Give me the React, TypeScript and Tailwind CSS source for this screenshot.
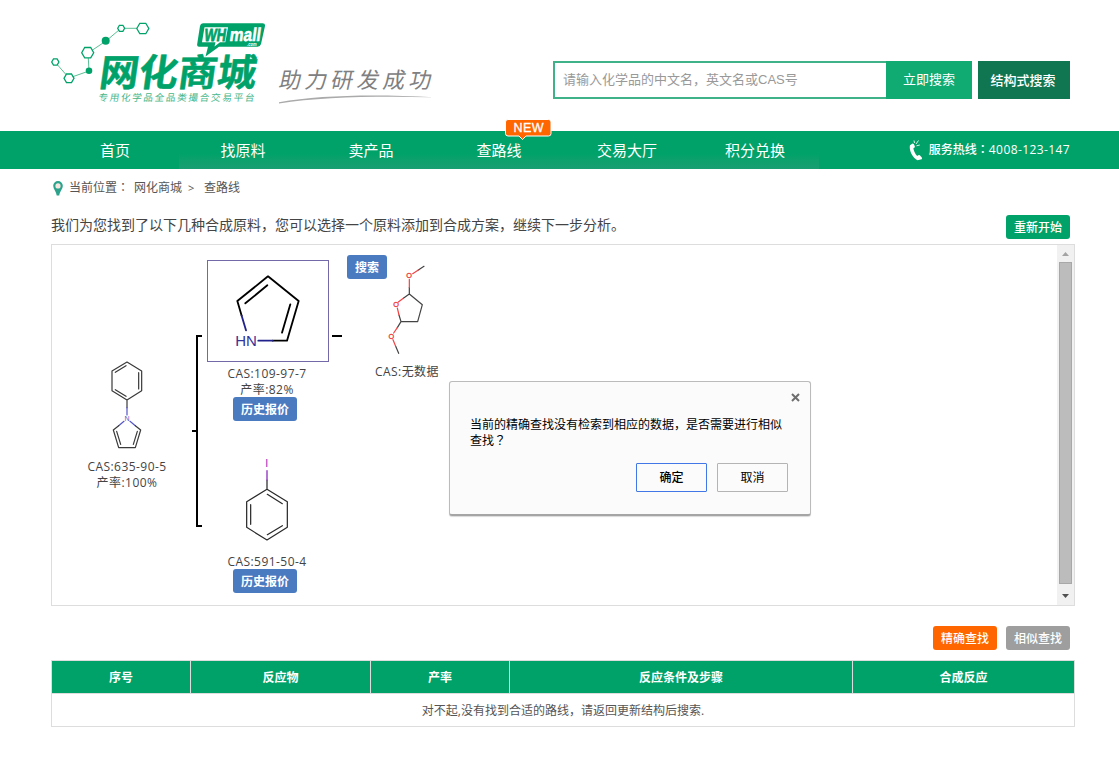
import type { ReactNode } from "react";

const navItems = ["首页", "找原料", "卖产品", "查路线", "交易大厅", "积分兑换"];

const columns = [
  { label: "序号", width: "w-[139px]" },
  { label: "反应物", width: "w-[180px]" },
  { label: "产率", width: "w-[139px]" },
  { label: "反应条件及步骤", width: "w-[343px]" },
  { label: "合成反应", width: "w-[221px]" },
];

/* Full-width punctuation centred in its cell. */
function Mark({ children }: { children: ReactNode }) {
  return <span className="font-['Noto_Sans_CJK_TC',sans-serif] leading-none">{children}</span>;
}

function Logo() {
  return (
    <svg
      className="block font-['Noto_Sans_CJK_SC',sans-serif]"
      width="400"
      height="110"
      viewBox="40 10 400 110"
      role="img"
      aria-label="网化商城"
    >
      <path
        d="M55 62L69 78L89 71L88 53L106 41L121 28.3H142"
        fill="none"
        stroke="#5bbf95"
        strokeWidth="1"
      />
      <g fill="#fff" stroke="#00a26a" strokeWidth="1.3">
        <path d="M51.7 62l1.8-3.1h3.6l1.8 3.1-1.8 3.1h-3.6z" />
        <path d="M64 78.3l2.5-4.3h5l2.5 4.3-2.5 4.3h-5z" />
        <path d="M81.7 52.7l3-5.2h6l3 5.2-3 5.2h-6z" />
        <path d="M117.7 28.3l1.7-3h3.5l1.7 3-1.7 3h-3.5z" />
        <path d="M136.8 28.5l3-5.2h6l3 5.2-3 5.2h-6z" />
      </g>
      <circle cx="89" cy="70.8" r="3.3" fill="#00a26a" />
      <circle cx="105.7" cy="40.8" r="4" fill="#00a26a" />
      <text
        transform="translate(98 85.8) skewX(-8)"
        fontSize="37.5"
        fontWeight="700"
        fill="#00a26a"
        stroke="#00a26a"
        strokeWidth=".5"
        textLength="157"
        lengthAdjust="spacingAndGlyphs"
      >
        网化商城
      </text>
      <text
        transform="translate(98 101.3) skewX(-8)"
        fontSize="9.6"
        fill="#45b78a"
        textLength="156"
      >
        专用化学品全品类撮合交易平台
      </text>
      <path
        d="M203 23.3H262.5Q265.5 23.3 265 26L261 44Q260.3 46.7 257.5 46.7H219L205.5 56.5L208 46.7H199Q196.7 46.7 197.2 44L200 26Q200.5 23.3 203 23.3z"
        fill="#00a26a"
      />
      <path d="M204.5 27.3H228L225.3 42.3H220L214.5 46.5L215.5 42.3H202z" fill="#fff" />
      <text
        transform="translate(203.8 41.2) skewX(-8)"
        fontFamily="Liberation Sans"
        fontSize="17.5"
        fontWeight="700"
        fill="#00a26a"
        stroke="#00a26a"
        strokeWidth=".8"
        textLength="21.5"
        lengthAdjust="spacingAndGlyphs"
      >
        WH
      </text>
      <text
        transform="translate(229 41) skewX(-8)"
        fontFamily="Liberation Sans"
        fontSize="18.5"
        fontWeight="700"
        fill="#fff"
        stroke="#fff"
        strokeWidth=".5"
        textLength="31"
        lengthAdjust="spacingAndGlyphs"
      >
        mall
      </text>
      <text
        x="247"
        y="45.6"
        fontFamily="Liberation Sans"
        fontSize="5.5"
        fontWeight="700"
        fontStyle="italic"
        fill="#fff"
        textLength="9.5"
        lengthAdjust="spacingAndGlyphs"
      >
        .com
      </text>
      <text
        transform="translate(278 88) skewX(-12)"
        fontSize="22"
        fontWeight="400"
        fill="#808080"
        textLength="152"
      >
        助力研发成功
      </text>
      <path d="M279 102.2C320 95 375 94 434 97.3C375 96 320 97 279 103.5z" fill="#aaa" />
    </svg>
  );
}

function Header() {
  return (
    <header className="flex h-[131px] items-start">
      <div className="w-[513px] pl-10 pt-2.5">
        <Logo />
      </div>
      <div className="ml-10 mt-[61px] flex h-[38px] text-[13px]">
        <div className="flex w-[333px] items-center border-2 border-r-0 border-[#3fb28a] pl-2 font-['Liberation_Sans','Noto_Sans_CJK_SC',sans-serif] text-[#999]">
          请输入化学品的中文名，英文名或CAS号
        </div>
        <button className="w-[86px] bg-[#0fab73] text-white">立即搜索</button>
        <button className="ml-1.5 w-[92px] bg-[#107652] pr-0.5 pt-0.5 font-medium text-white">结构式搜索</button>
      </div>
    </header>
  );
}

function Nav() {
  return (
    <nav className="flex h-[38px] bg-[#00a26a] pl-[51px] text-white">
      {navItems.map((item, i) => (
        <div
          key={item}
          className={
            "relative flex w-32 items-center justify-center text-[15px] " +
            (i > 0 ? "bg-linear-to-b from-[#00a26a] from-60% to-[#1a9e72]" : "")
          }
        >
          {item}
          {i < 5 && <span className="absolute right-[-1px] top-[11px] h-[15px] w-px bg-[#3cb588]" />}
          {item === "查路线" && (
            <span className="absolute left-[70px] top-[-12px] h-[22px] w-[48px]">
              <svg className="block" width="48" height="22" viewBox="0 0 48 22">
                <path
                  d="M3 .5H43.5Q46 .5 46 3V14.5Q46 17 43.5 17H21L17.5 20.5L14 17H3Q.5 17 .5 14.5V3Q.5 .5 3 .5z"
                  fill="#ff6600"
                  stroke="#fff"
                  strokeWidth="1"
                />
                <text
                  x="23.5"
                  y="13"
                  textAnchor="middle"
                  fontFamily="Liberation Sans"
                  fontSize="12.5"
                  fill="#fff"
                  stroke="#fff"
                  strokeWidth=".3"
                  textLength="30"
                >
                  NEW
                </text>
              </svg>
            </span>
          )}
        </div>
      ))}
      <div className="flex flex-1 items-center justify-end pr-[49px] text-xs font-medium">
        <svg className="mr-1.5 mt-[-1px]" width="14" height="22" viewBox="0 0 14 22">
          <path
            d="M3.5 4.5L1 6.2C-.3 11 3.5 19 8.5 21.3L12.7 20.2Q13.3 19.5 12.8 18.5L10.8 16.3Q10 15.8 9.3 16.3L8.2 17C6 14.8 4.5 11.5 4.4 9.3L5.6 8.4Q6 8 5.8 7.2L4.8 5z"
            fill="#fff"
          />
          <path d="M5.5 4L5 1.5M7 5L9.5 1.5M7.5 6.8L10.8 6" stroke="#d8f2e6" strokeWidth="1" fill="none" />
        </svg>
        <span>
          服务热线<Mark>：</Mark>
        </span>
        <span className="tracking-[0.4px]">4008-123-147</span>
      </div>
    </nav>
  );
}

const atom = { fontFamily: "Liberation Sans", textAnchor: "middle" as const };

function Molecules() {
  return (
    <svg
      className="absolute left-0 top-0"
      width="460"
      height="360"
      viewBox="52 245 460 360"
      fill="none"
      strokeLinecap="round"
      strokeLinejoin="round"
    >
      <path
        fill="#000"
        d="M196 335h6v2h-4v188h4v2h-6v-95h-4v-2h4zM332 335h10v2h-10z"
      />

      <g transform="translate(60 340) scale(.33333)" stroke="#3a3a3a" strokeWidth="3.6">
        <path d="M201 66L245 93V152L201 180L156 152V93zM236 98V147M198 77L166 97M198 169L166 149M201 180V203" />
        <path d="M201 203V225M192 244L176 257M210 244L226 257" stroke="#5555c8" />
        <path d="M176 257L160 270L176 323H226L242 270L226 257M170 274L182 313M232 274L220 313" />
        <text x="201" y="244" {...atom} fontSize="21" fill="#5555c8" stroke="none">
          N
        </text>
      </g>

      <g transform="translate(190 250) scale(.33333)" stroke="#000" strokeWidth="5.5">
        <path d="M155 197L142 153L234 79L326 153L291 272H248M166 160L232 106M301 163L276 248" />
        <path d="M155 197L168 241M205 272H248" stroke="#22228c" />
        <text
          x="168"
          y="289"
          {...atom}
          fontSize="46"
          fill="#33339a"
          stroke="none"
          textLength="65"
          lengthAdjust="spacingAndGlyphs"
        >
          HN
        </text>
      </g>

      <g transform="translate(190 250) scale(.33333)" stroke="#444" strokeWidth="3.6">
        <path d="M640 145L658 132L697 164L683 215H633L627 195M658 132V112M685 60L702 49M633 215L622 233M617 289L626 310" />
        <path
          d="M640 145L625 156M622 174L627 195M658 112V88M668 71L685 60M622 233L611 249M609 269L617 289"
          stroke="#f24444"
        />
        <g {...atom} fontSize="22" fill="#f03030" stroke="#f03030" strokeWidth=".8">
          <text x="618" y="171">O</text>
          <text x="657" y="84">O</text>
          <text x="604" y="267">O</text>
        </g>
      </g>

      <g transform="translate(200 440) scale(.33333)" stroke="#2a2a2a" strokeWidth="3.7">
        <path d="M201 148L262 185V262L201 300L140 262V185zM202 163L247 191M202 284L247 257M152 194V253M201 148V120" />
        <path d="M201 120V92" stroke="#9030c0" strokeWidth="4" />
        <text x="200" y="80" {...atom} fontSize="32" fill="#9030c0" stroke="none">
          I
        </text>
      </g>
    </svg>
  );
}

function Label({ className, children }: { className: string; children: ReactNode }) {
  return (
    <div className={"absolute w-[130px] text-center text-xs leading-4 tracking-[0.45px] text-[#444] " + className}>
      {children}
    </div>
  );
}

function Tag({ className, children }: { className: string; children: ReactNode }) {
  return (
    <button
      className={
        "absolute flex h-6 items-center justify-center rounded-[3px] bg-[#4a7abf] pt-0.5 text-xs font-bold text-white " +
        className
      }
    >
      {children}
    </button>
  );
}

function Dialog() {
  return (
    <div className="absolute left-[397px] top-[136px] h-[135px] w-[362px] rounded-[3px] border border-[#bbb] border-b-2 border-b-[#a5a5a5] bg-[#fbfbfb] pl-5 pr-[22px] text-xs text-black shadow-[0_1px_1px_rgba(0,0,0,0.15)]">
      <svg className="absolute right-2.5 top-[11px]" width="9" height="9" viewBox="0 0 9 9">
        <path d="M1 1L8 8M8 1L1 8" stroke="#6e6e6e" strokeWidth="2" />
      </svg>
      <p className="mt-[35px] h-8 w-[314px] leading-4">
        当前的精确查找没有检索到相应的数据，是否需要进行相似
        <br />
        查找<Mark>？</Mark>
      </p>
      <div className="mt-3.5 flex justify-end gap-2.5">
        <button className="h-[29px] w-[71px] rounded-[1px] border border-[#4277e8] font-medium">确定</button>
        <button className="h-[29px] w-[71px] rounded-[1px] border border-[#b4b4b4]">取消</button>
      </div>
    </div>
  );
}

function RoutePanel() {
  return (
    <section className="relative flex h-[362px] justify-end border border-[#ddd]">
      <Molecules />
      <div className="absolute left-[155px] top-[15px] h-[102px] w-[122px] border border-[#7469a8]" />
      <Label className="left-[10px] top-[214px]">
        CAS:635-90-5
        <br />
        产率:100%
      </Label>
      <Label className="left-[150px] top-[121px]">
        CAS:109-97-7
        <br />
        产率:82%
      </Label>
      <Label className="left-[290px] top-[119px]">CAS:无数据</Label>
      <Label className="left-[150px] top-[309px]">CAS:591-50-4</Label>
      <Tag className="left-[181px] top-[152px] w-16">历史报价</Tag>
      <Tag className="left-[181px] top-[324px] w-16">历史报价</Tag>
      <Tag className="left-[295px] top-[10px] w-10">搜索</Tag>
      <Dialog />
      <div className="flex w-[17px] flex-col items-center bg-[#f1f1f1]">
        <div className="flex h-[17px] items-center">
          <svg width="7" height="4" viewBox="0 0 7 4">
            <path d="M0 4L3.5 0L7 4z" fill="#a3a3a3" />
          </svg>
        </div>
        <div className="mr-px h-[322px] w-[13px] border border-[#a8a8a8] bg-[#bcbcbc]" />
        <div className="flex flex-1 items-center pt-0.5">
          <svg width="7" height="4" viewBox="0 0 7 4">
            <path d="M0 0L3.5 4L7 0z" fill="#505050" />
          </svg>
        </div>
      </div>
    </section>
  );
}

function ResultTable() {
  return (
    <section className="mt-2.5 border border-[#ddd] text-xs">
      <div className="flex h-8 divide-x divide-[#ddd] bg-[#00a26a] font-bold text-white">
        {columns.map((c) => (
          <div key={c.label} className={"flex items-center justify-center pt-0.5 " + c.width}>
            {c.label}
          </div>
        ))}
      </div>
      <div className="flex h-[33px] items-center justify-center border-t border-[#ddd] pt-0.5 text-[#555]">
        对不起,没有找到合适的路线，请返回更新结构后搜索.
      </div>
    </section>
  );
}

export default function App() {
  return (
    <div className="h-[769px] w-[1119px] overflow-hidden bg-white font-['Open_Sans','Noto_Sans_CJK_SC',sans-serif] text-[#444]">
      <Header />
      <Nav />
      <main className="ml-[51px] w-[1024px]">
        <div className="flex h-[37px] items-center pl-0.5 text-xs text-[#555]">
          <svg className="mr-1.5 mt-0.5" width="10" height="15" viewBox="0 0 10 15">
            <path
              d="M5 0A4.8 4.8 0 0 1 9.8 4.8C9.8 8 6.5 11 6.3 14.5H3.7C3.5 11 .2 8 .2 4.8A4.8 4.8 0 0 1 5 0z"
              fill="#2ba38c"
            />
            <circle cx="5" cy="4.9" r="2.6" fill="#f7e6df" />
          </svg>
          <span className="w-[65px]">
            当前位置<Mark>：</Mark>
          </span>
          <span>网化商城</span>
          <span className="w-[22px] pl-1.5 pt-0.5 text-[11px]">&gt;</span>
          <span>查路线</span>
        </div>
        <div className="flex h-[38px] justify-between pr-[5px]">
          <p className="pt-[9px] text-sm leading-5">
            我们为您找到了以下几种合成原料，您可以选择一个原料添加到合成方案，继续下一步分析。
          </p>
          <button className="mt-[9px] h-6 w-16 rounded-[3px] bg-[#00a26a] pt-0.5 text-xs font-medium text-white">
            重新开始
          </button>
        </div>
        <RoutePanel />
        <div className="mt-5 flex h-6 justify-end gap-[9px] pr-[5px] text-xs font-medium text-white">
          <button className="w-16 rounded-[3px] bg-[#ff6600] pt-0.5">精确查找</button>
          <button className="w-16 rounded-[3px] bg-[#9e9e9e] pt-0.5">相似查找</button>
        </div>
        <ResultTable />
      </main>
    </div>
  );
}
